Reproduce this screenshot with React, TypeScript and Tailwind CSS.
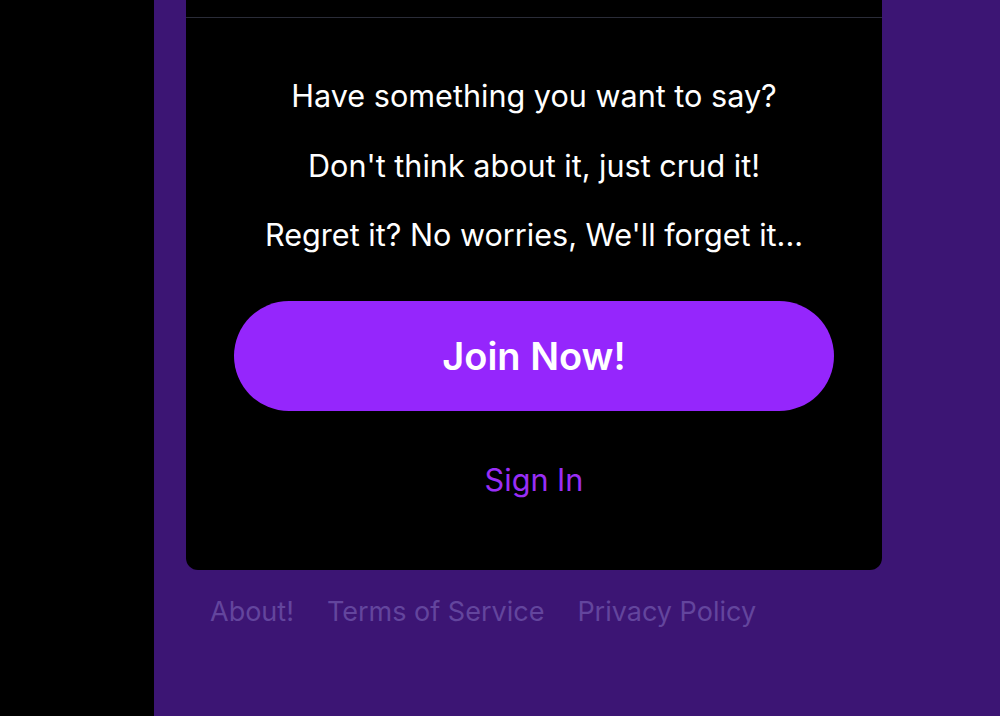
const links = ["About!", "Terms of Service", "Privacy Policy"];

const App = () => {
  return (
    <div
      className="flex min-h-[716px] w-full bg-black"
      style={{ fontFamily: "Inter, 'Noto Sans', sans-serif" }}
    >
      <div className="w-[154px] shrink-0 bg-black" />
      <main className="flex-1 bg-[#3c1574] pl-8">
        <div className="w-[696px] rounded-b-xl bg-black">
          <div className="h-[18px] border-b border-[#2a2c38]" />
          <div className="flex flex-col items-center px-10 pt-[60px] pb-[72px]">
            <div className="flex flex-col items-center gap-[33.5px] text-[30.6px] leading-[36px] text-white">
              <p>Have something you want to say?</p>
              <p>Don't think about it, just crud it!</p>
              <p>Regret it? No worries, We'll forget it...</p>
            </div>
            <button className="mt-[48px] h-[110px] w-[600px] rounded-full bg-[#9526fc] text-[38px] font-semibold text-white">
              Join Now!
            </button>
            <button className="mt-[51px] text-[30.6px] leading-[36px] text-[#9a2ef6]">
              Sign In
            </button>
          </div>
        </div>
        <nav className="flex gap-[33px] px-6 pt-6 text-[27px] leading-[36px] text-[#63459d]">
          {links.map((l) => (
            <a key={l} href="#">
              {l}
            </a>
          ))}
        </nav>
      </main>
    </div>
  );
};

export default App;
